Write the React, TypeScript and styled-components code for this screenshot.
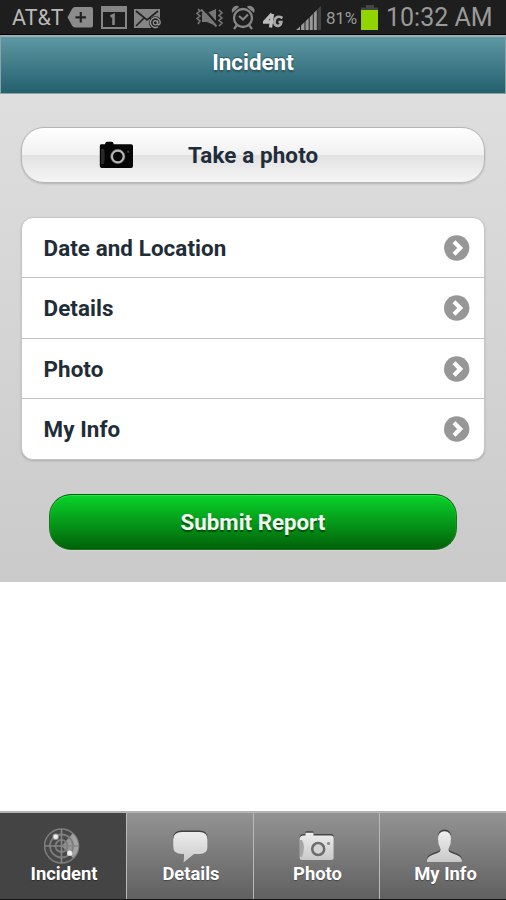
import React from "react";
import styled, { createGlobalStyle } from "styled-components";

const GlobalStyle = createGlobalStyle`
  * { box-sizing: border-box; }
  body { margin: 0; background: #fff; font-family: Roboto, sans-serif; }
`;

const Screen = styled.div`
  width: 506px;
  height: 900px;
  display: flex;
  flex-direction: column;
  overflow: hidden;
  background: #fff;
`;

const StatusBar = styled.div`
  height: 35px;
  flex: none;
  display: flex;
  align-items: center;
  background: #1e1e1e;
  border-bottom: 1px solid #000;
  color: #999;
  padding-left: 12px;
`;

const StatusIcon = styled.svg<{ $gap: number }>`
  height: 34px;
  flex: none;
  display: block;
  margin-left: ${(p) => p.$gap}px;
`;

const StatusText = styled.span<{ $size: number; $width: number; $gap?: number; $spacing?: number; $color?: string }>`
  flex: none;
  width: ${(p) => p.$width}px;
  margin-left: ${(p) => p.$gap ?? 0}px;
  font-size: ${(p) => p.$size}px;
  letter-spacing: ${(p) => p.$spacing ?? 0}px;
  line-height: 34px;
  padding-top: 2px;
  white-space: nowrap;
  color: ${(p) => p.$color ?? "#999"};
`;

const Header = styled.header`
  height: 59px;
  flex: none;
  border: 1px solid #8ba3a6;
  border-top: 2px solid #9fb0b1;
  background: linear-gradient(#5e98a5, #245f6d);
  display: flex;
  justify-content: center;
`;

const Title = styled.h1`
  margin: 0;
  font-size: 22.4px;
  font-weight: 700;
  line-height: 50px;
  color: #fff;
  text-shadow: 0 -1px 1px rgba(20, 60, 70, 0.6), 0 2px 2px rgba(0, 0, 0, 0.3);
`;

const Content = styled.main`
  height: 488px;
  flex: none;
  padding: 33px 21px 0;
  background: linear-gradient(#dedede, #cacaca);
`;

const PhotoButton = styled.button`
  width: 464px;
  height: 56px;
  border: 1px solid #b5b5b5;
  border-radius: 23px;
  padding: 0 0 0 77px;
  display: flex;
  align-items: center;
  background: linear-gradient(#fff 0%, #f1f1f1 49%, #e2e2e2 51%, #f5f5f5 100%);
  box-shadow: 0 1px 2px rgba(0, 0, 0, 0.18);
  font: 700 22.4px Roboto, sans-serif;
  color: #1f2d3a;
  text-align: left;
`;

const ButtonLabel = styled.span`
  margin-left: 54px;
  letter-spacing: 0.12px;
`;

const List = styled.ul`
  list-style: none;
  margin: 34px 0 0;
  padding: 0;
  width: 464px;
  height: 243px;
  border: 1px solid #c6c6c6;
  border-radius: 12px;
  background: #fff;
  box-shadow: 0 1px 2px rgba(0, 0, 0, 0.18);
`;

const ListRow = styled.li`
  height: 60.5px;
  padding: 0 14px 0 21.5px;
  display: flex;
  align-items: center;
  justify-content: space-between;
  font-size: 22.4px;
  letter-spacing: 0.08px;
  font-weight: 700;
  color: #1f2d37;
  border-top: 1px solid #c2c2c2;
  &:first-child { border-top: 0; height: 59.4px; }
`;

const SubmitButton = styled.button`
  display: block;
  width: 408px;
  height: 56px;
  margin: 34px 0 0 28px;
  padding: 0;
  border: 1px solid #16771c;
  border-top-color: #0c5c12;
  border-radius: 22px;
  background: linear-gradient(#08d42a, #026109);
  box-shadow: inset 0 1px 1px #29e746, 0 1px 1px rgba(255, 255, 255, 0.2);
  font: 700 22.3px Roboto, sans-serif;
  color: #f1f6f1;
  text-shadow: 0 2px 1px rgba(0, 40, 0, 0.6);
`;

const Filler = styled.div`
  flex: 1;
`;

const TabBar = styled.nav`
  height: 89px;
  flex: none;
  display: grid;
  grid-template-columns: 127px 127px 126px 126px;
  border-top: 2px solid #b2b2b2;
  border-bottom: 1px solid #151515;
`;

const Tab = styled.a<{ $active?: boolean }>`
  display: flex;
  flex-direction: column;
  align-items: center;
  padding: 13px 0 0 1px;
  border-right: 1px solid #b9b9b9;
  background: ${(p) => (p.$active ? "#444" : "linear-gradient(#939393, #606060)")};
  font-size: 18.4px;
  font-weight: 700;
  line-height: 22px;
  color: #fff;
  text-shadow: 0 1px 1px rgba(0, 0, 0, 0.35);
  &:last-child { border-right: 0; padding-left: 4px; }
`;

const TabIcon = styled.svg`
  display: block;
  width: 40px;
  height: 38px;
  flex: none;
`;

const TabLabel = styled.span`
  margin: -1px 0 0 1px;
`;

const Chevron = () => (
  <svg width="26" height="26" viewBox="0 0 26 26">
    <circle cx="12.7" cy="13" r="12.7" fill="#979797" />
    <path d="M10 6.8 L16.2 13 L10 19.2" fill="none" stroke="#fff" strokeWidth="4.2" />
  </svg>
);

const CameraBlack = () => (
  <svg width="35" height="28" viewBox="0 0 35 28">
    <path d="M2 3.2 H6 L6.6 1.5 Q7 .7 8 .7 H13 Q14 .7 14.2 1.5 L14.7 3.2 H32 Q34 3.2 34 5 V25 Q34 27 32 27 H3 Q.8 27 .8 25 V5 Q.8 3.2 2 3.2Z" fill="#050505" />
    <path d="M2 8 H5 Q6.5 14 5 23 H2Z" fill="#292929" />
    <circle cx="18.8" cy="15.5" r="6" fill="#080808" stroke="#b8b8b8" strokeWidth="2.4" />
    <circle cx="18.8" cy="15.5" r="7.2" fill="none" stroke="#555" strokeWidth=".6" />
    <circle cx="29.2" cy="10.7" r="1.2" fill="#3c3c3c" />
  </svg>
);

const Gradients = () => (
  <defs>
    <linearGradient id="silver" x1="0" y1="0" x2="0" y2="1">
      <stop stopColor="#eee" />
      <stop offset="1" stopColor="#c9c9c9" />
    </linearGradient>
    <linearGradient id="sweep" x1="0" x2="1">
      <stop stopColor="#888" />
      <stop offset="1" stopColor="#aaa" />
    </linearGradient>
  </defs>
);

const Radar = () => (
  <TabIcon viewBox="0 0 40 38">
    <Gradients />
    <circle cx="17.5" cy="20" r="17" fill="#484848" stroke="#7d7d7d" strokeWidth="1.6" />
    <path d="M17.5 20 L28.5 7.5 A16.5 16.5 0 0 1 29 32Z" fill="url(#sweep)" />
    <circle cx="17.5" cy="20" r="11.5" fill="none" stroke="#7d7d7d" strokeWidth="1.8" />
    <circle cx="17.5" cy="20" r="6" fill="none" stroke="#7d7d7d" strokeWidth="1.8" />
    <path d="M.5 20 H34.5 M17.5 3 V37" stroke="#858585" strokeWidth="1.7" />
    <circle cx="11.7" cy="10.7" r="3.2" fill="#999" />
    <circle cx="11.7" cy="10.7" r="2.3" fill="#eee" />
    <circle cx="25.7" cy="27.2" r="2.6" fill="#eee" />
  </TabIcon>
);

const bubble = "M11 6 H28.5 Q36.5 6 36.5 13.5 V20.5 Q36.5 28 28.5 28 H23 L12.5 36.5 L13 28 H11 Q2.2 28 2.2 20.5 V13.5 Q2.2 6 11 6Z";
const Bubble = () => (
  <TabIcon viewBox="0 0 40 38">
    <path d={bubble} fill="#424242" transform="translate(0 -1.5)" />
    <path d={bubble} fill="url(#silver)" />
  </TabIcon>
);

const camera = "M6 9.5 H8.5 V7.5 Q8.5 6.7 9.5 6.7 H15.5 Q16.5 6.7 16.5 7.5 V9.5 H34 Q36.7 9.5 36.7 12 V31.5 Q36.7 34 34 34 H5 Q2.6 34 2.6 31.5 V12 Q3.5 9.5 6 9.5Z";
const Camera = () => (
  <TabIcon viewBox="0 0 40 38">
    <path d={camera} fill="#464646" transform="translate(0 -1.4)" />
    <path d={camera} fill="url(#silver)" />
    <path d="M3 14 H5 Q9 20 5 31 H3Z" fill="#a7a7a7" />
    <circle cx="21.2" cy="23" r="6" fill="#d5d5d5" stroke="#6c6c6c" strokeWidth="2.5" />
    <circle cx="31.5" cy="17.5" r="1.6" fill="#888" />
  </TabIcon>
);

const person = "M19.5 5.2 Q26 5.2 26 13 Q26 18.5 24 21.5 Q22.8 24 24.5 26 C28 28.4 36.3 29.2 36.8 34 V36 H2 V34 C2.5 29.2 11 28.4 14.5 26 Q16.3 24 15 21.5 Q13 18.5 13 13 Q13 5.2 19.5 5.2Z";
const Person = () => (
  <TabIcon viewBox="0 0 40 38">
    <path d={person} fill="#414141" transform="translate(0 -1.6)" />
    <path d={person} fill="url(#silver)" />
  </TabIcon>
);

const tabs = [
  { label: "Incident", Icon: Radar },
  { label: "Details", Icon: Bubble },
  { label: "Photo", Icon: Camera },
  { label: "My Info", Icon: Person },
];

export default function App() {
  return (
    <>
      <GlobalStyle />
      <Screen>
        <StatusBar>
          <StatusText $size={21.5} $width={52} $color="#b9b9b9">AT&amp;T</StatusText>
          <StatusIcon $gap={3} width="26" viewBox="67 0 26 34">
            <path d="M75 7 H91 Q93 7 93 9 V25.5 Q93 27.5 91 27.5 H75 Q73 27.5 72 25.5 L67.5 17.3 L72 9 Q73 7 75 7Z" fill="#8b8b8b" />
            <path d="M75.5 17.3 H86 M80.8 12 V22.5" stroke="#222" strokeWidth="2.2" />
          </StatusIcon>
          <StatusIcon $gap={8} width="26" viewBox="101 0 26 34">
            <path d="M101 6 H127 V29 H101Z M103 12 V27 H125 V12Z" fill="#858585" fillRule="evenodd" />
            <path d="M110.5 16.5 L113.5 15 V25" fill="none" stroke="#858585" strokeWidth="2.6" />
          </StatusIcon>
          <StatusIcon $gap={7} width="28" viewBox="134 0 28 34">
            <path d="M134 9 H160 V28 H134Z" fill="#858585" />
            <path d="M136 11 L147 20 L158 11 M136 26 L144 18 M150 18 L156 24" fill="none" stroke="#222" strokeWidth="1.7" />
            <circle cx="155.5" cy="22.8" r="6.5" fill="#222" />
            <path d="M158 26.7 A4.9 4.9 0 1 1 160.2 22 Q160 25.4 157.7 24.6 V20.5" fill="none" stroke="#999" strokeWidth="1.3" />
            <circle cx="155.4" cy="22.7" r="2.1" fill="none" stroke="#999" strokeWidth="1.2" />
          </StatusIcon>
          <StatusIcon $gap={34} width="28" viewBox="196 0 28 34">
            <path d="M202 13 H207 L216 9 V26 L207 22 H202Z" fill="#777" />
            <path d="M203 8 L219 26" stroke="#1e1e1e" strokeWidth="2.4" />
            <path d="M201 9.5 L216.5 26.5" stroke="#777" strokeWidth="2" />
            <path d="M198 9 L200 11 L197 13.5 L200 16 L197 18.5 L200 21 L198 24 M219 10 L222 13 L219 15.5 L222 18 L219 20.5 L222 23 L219 26" fill="none" stroke="#777" strokeWidth="1.6" />
          </StatusIcon>
          <StatusIcon $gap={7} width="26" viewBox="231 0 26 34">
            <circle cx="243" cy="18" r="9" fill="none" stroke="#858585" strokeWidth="2.3" />
            <path d="M239 16 L243 19.5 L248 14.5 M237 25 L234 29 M249 25 L252 29" fill="none" stroke="#858585" strokeWidth="2.2" />
            <path d="M232 13 Q231 8 235 6 Q238 5 239 7Z M254 13 Q256 8 251 6 Q248 5 247 7Z" fill="#858585" />
          </StatusIcon>
          <StatusIcon $gap={6} width="22" viewBox="263 0 22 34">
            <path d="M272 14 L264.5 22 H273.5 M272.5 14 L270.5 27.5" fill="none" stroke="#bbb" strokeWidth="3.3" />
            <path d="M282.5 18 Q276 14.5 274.5 21 Q274 26.5 278.5 25.8 Q281 25.5 281.3 22 H278.5" fill="none" stroke="#aaa" strokeWidth="2.7" />
          </StatusIcon>
          <StatusIcon $gap={11} width="27" viewBox="296 0 27 34">
            <path d="M317.5 9 L321 6 V30 H317.5Z" fill="#444" />
            <path d="M296 30 L300 26.5 V30Z M301 25.5 L304.5 22 V30 H301Z M305.5 21.5 L308.7 18 V30 H305.5Z M309.7 17.2 L312.8 14 V30 H309.7Z M313.8 13 L316.8 10 V30 H313.8Z" fill="#999" />
          </StatusIcon>
          <StatusText $gap={3} $size={17} $width={34} $spacing={-0.2}>81%</StatusText>
          <StatusIcon $gap={1} width="18" viewBox="361 0 18 34">
            <path d="M366 5 H374 V7.5 H378 V10 H361 V7.5 H366Z" fill="#454545" />
            <path d="M361 10 H378 V30 H361Z" fill="#92d400" />
          </StatusIcon>
          <StatusText $gap={7} $size={25} $width={110}>10:32 AM</StatusText>
        </StatusBar>
        <Header>
          <Title>Incident</Title>
        </Header>
        <Content>
          <PhotoButton>
            <CameraBlack />
            <ButtonLabel>Take a photo</ButtonLabel>
          </PhotoButton>
          <List>
            {["Date and Location", "Details", "Photo", "My Info"].map((label) => (
              <ListRow key={label}>
                {label}
                <Chevron />
              </ListRow>
            ))}
          </List>
          <SubmitButton>Submit Report</SubmitButton>
        </Content>
        <Filler />
        <TabBar>
          {tabs.map(({ label, Icon }, i) => (
            <Tab key={label} $active={i === 0}>
              <Icon />
              <TabLabel>{label}</TabLabel>
            </Tab>
          ))}
        </TabBar>
      </Screen>
    </>
  );
}
